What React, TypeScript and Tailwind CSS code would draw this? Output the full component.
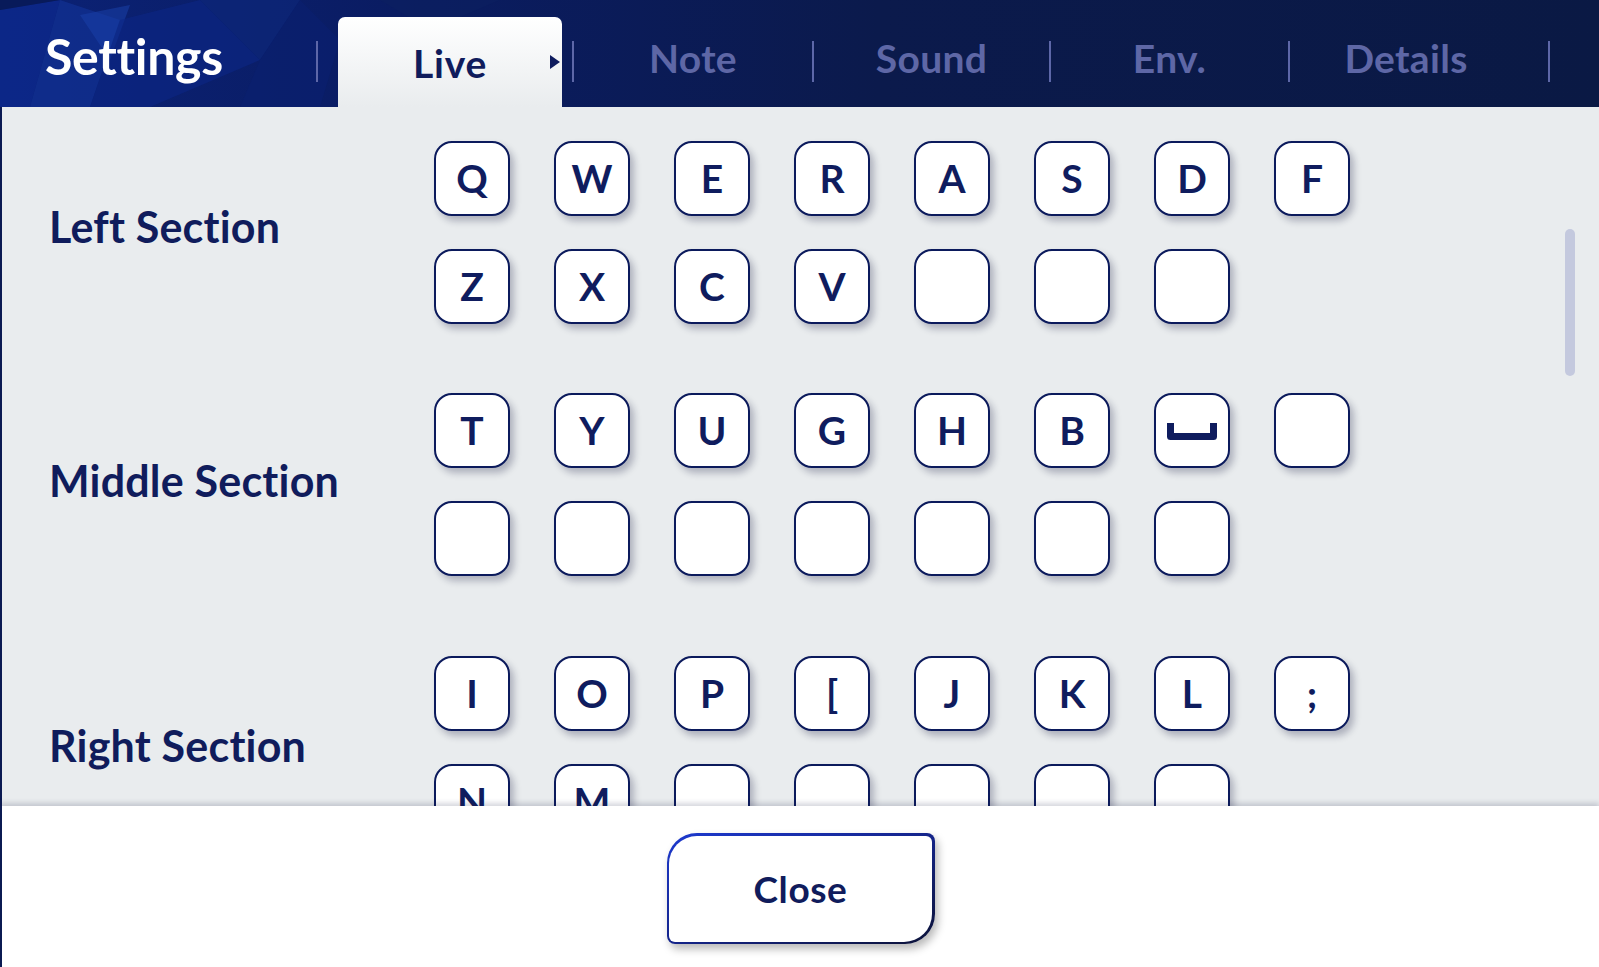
import React from 'react';

type Section = { title: string; rows: string[][]; mt: string; lp: string };

const sections: Section[] = [
  {
    title: 'Left Section',
    mt: 'mt-[34px]',
    lp: 'pb-[11px]',
    rows: [
      ['Q', 'W', 'E', 'R', 'A', 'S', 'D', 'F'],
      ['Z', 'X', 'C', 'V', '', '', ''],
    ],
  },
  {
    title: 'Middle Section',
    mt: 'mt-[69px]',
    lp: 'pb-[6px]',
    rows: [
      ['T', 'Y', 'U', 'G', 'H', 'B', 'SPACE', ''],
      ['', '', '', '', '', '', ''],
    ],
  },
  {
    title: 'Right Section',
    mt: 'mt-[80px]',
    lp: 'pb-[2px]',
    rows: [
      ['I', 'O', 'P', '[', 'J', 'K', 'L', ';'],
      ['N', 'M', '', '', '', '', ''],
    ],
  },
];

const tabs = [
  { label: 'Note', w: 'w-[238px]', pad: '' },
  { label: 'Sound', w: 'w-[235px]', pad: '' },
  { label: 'Env.', w: 'w-[237px]', pad: '' },
  { label: 'Details', w: 'w-[258px]', pad: 'pr-[26px]' },
];

function Divider() {
  return <div className="w-[2px] h-[41px] bg-[#5d67a8] shrink-0" />;
}

function Key({ value }: { value: string }) {
  return (
    <div className="w-[76px] h-[75px] shrink-0 rounded-[18px] border-[2.5px] border-[#0b1a5c] bg-white shadow-[4px_5px_7px_rgba(20,25,60,0.28)] flex items-center justify-center text-[39px] font-bold text-[#0f1c5e] leading-none">
      {value === 'SPACE' ? (
        <svg width="50" height="18" viewBox="0 0 50 18">
          <path d="M3.5 1 V14.5 H46.5 V1" fill="none" stroke="#0f1c5e" strokeWidth="7" strokeLinejoin="round" />
        </svg>
      ) : (
        value
      )}
    </div>
  );
}

function HeaderBg() {
  return (
    <svg className="absolute inset-0 w-full h-full" viewBox="0 0 1599 107" preserveAspectRatio="none">
      <defs>
        <linearGradient id="hdr" x1="0" y1="0" x2="1" y2="0">
          <stop offset="0" stopColor="#0b2276" />
          <stop offset="0.25" stopColor="#0a1c62" />
          <stop offset="0.55" stopColor="#0b1a4c" />
          <stop offset="1" stopColor="#0a1944" />
        </linearGradient>
      </defs>
      <rect width="1599" height="107" fill="url(#hdr)" />
      <polygon points="0,10 60,0 30,107 0,107" fill="#0d2a8e" opacity="0.7" />
      <polygon points="30,107 60,0 120,20 90,107" fill="#123399" opacity="0.6" />
      <polygon points="80,15 130,5 110,60" fill="#1a3fa8" opacity="0.55" />
      <polygon points="120,20 200,0 260,60 150,107 90,107" fill="#0c2786" opacity="0.6" />
      <polygon points="200,0 300,0 260,60" fill="#0e2a80" opacity="0.5" />
      <polygon points="260,60 300,0 340,40 320,107 240,107" fill="#0a2070" opacity="0.6" />
      <polygon points="0,0 60,0 0,10" fill="#081a5a" />
      <polygon points="380,0 500,0 430,30" fill="#0c1f5f" opacity="0.5" />
    </svg>
  );
}

export default function App() {
  return (
    <div className="w-[1599px] h-[967px] flex flex-col overflow-hidden bg-white font-['Lato',sans-serif]">
      {/* header */}
      <div className="relative h-[107px] shrink-0">
        <HeaderBg />
        <div className="relative h-full flex items-center">
          <div className="w-[316px] shrink-0 pl-[45px] pt-[6px] text-[50px] font-bold text-white tracking-[-0.3px]">
            Settings
          </div>
          <div className="self-center mt-[16px]">
            <Divider />
          </div>
          <div className="w-[254px] shrink-0 self-end h-[90px] pl-[20px] pr-[10px]">
            <div className="relative h-full rounded-t-[7px] bg-gradient-to-b from-white to-[#e9ecee] flex items-center justify-center pt-[2px]">
              <span className="text-[39px] font-bold text-[#101c5c] tracking-[0.8px]">Live</span>
              <svg className="absolute right-[2px] top-[38px]" width="10" height="14" viewBox="0 0 10 14">
                <polygon points="0,0 10,7 0,14" fill="#0f1c5e" />
              </svg>
            </div>
          </div>
          <div className="self-center mt-[16px]">
            <Divider />
          </div>
          {tabs.map((t) => (
            <React.Fragment key={t.label}>
              <div className={`${t.w} ${t.pad} shrink-0 flex items-center justify-center pt-[10px] text-[39px] font-bold text-[#5e67a6] tracking-[0.3px]`}>
                {t.label}
              </div>
              <div className="self-center mt-[16px]">
                <Divider />
              </div>
            </React.Fragment>
          ))}
        </div>
      </div>

      {/* content */}
      <div className="relative h-[699px] shrink-0 bg-[#e9ecee] border-l-2 border-[#0b1a52] overflow-hidden">
        <div className="pl-[47px]">
          {sections.map((s) => (
            <div key={s.title} className={`${s.mt} flex items-center`}>
              <div className={`w-[385px] shrink-0 ${s.lp} text-[43px] font-bold text-[#101c5c] tracking-[0.2px]`}>
                {s.title}
              </div>
              <div className="flex flex-col gap-y-[33px]">
                {s.rows.map((row, ri) => (
                  <div key={ri} className="flex gap-x-[44px]">
                    {row.map((k, ki) => (
                      <Key key={ki} value={k} />
                    ))}
                  </div>
                ))}
              </div>
            </div>
          ))}
        </div>
        <div className="absolute right-[24px] top-[122px] w-[10px] h-[147px] rounded-full bg-[#c4c9de]" />
      </div>

      {/* footer */}
      <div className="relative z-10 flex-1 bg-white border-l-2 border-[#0b1a52] shadow-[0_-3px_5px_rgba(30,35,70,0.18)] flex justify-center pt-[27px]">
        <div className="w-[268px] h-[111px] p-[2.5px] rounded-tl-[30px] rounded-br-[30px] rounded-tr-[8px] rounded-bl-[8px] bg-gradient-to-br from-[#1d3ad0] via-[#14248a] to-[#0c1238] shadow-[3px_5px_8px_rgba(0,0,0,0.28)]">
          <div className="w-full h-full bg-white rounded-tl-[28px] rounded-br-[28px] rounded-tr-[6px] rounded-bl-[6px] flex items-center justify-center text-[37px] font-bold text-[#101c5c] tracking-[0.6px]">
            Close
          </div>
        </div>
      </div>
    </div>
  );
}
